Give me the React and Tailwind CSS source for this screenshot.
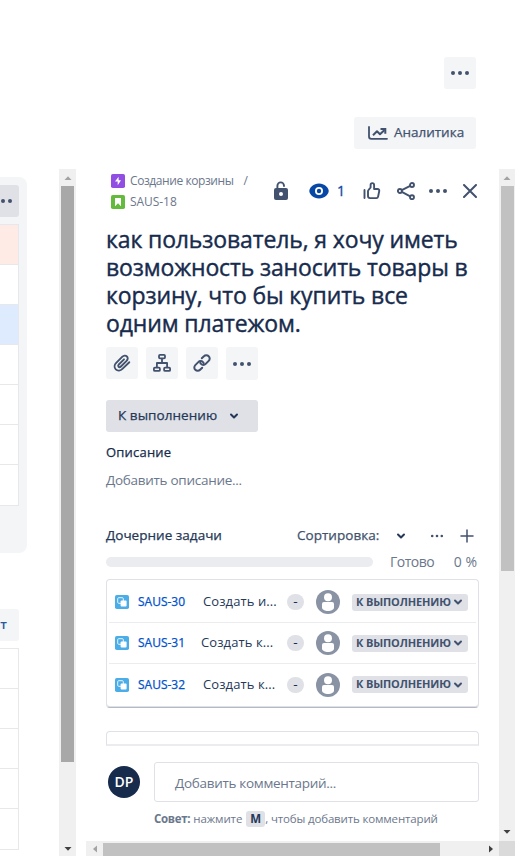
import React from "react";

const Dots = ({ className = "", r = 2, gap = 7 }) => (
  <svg width="20" height="6" viewBox="-10 -3 20 6" fill="currentColor" className={`shrink-0 ${className}`}>
    <circle cx={-gap} r={r} />
    <circle r={r} />
    <circle cx={gap} r={r} />
  </svg>
);

const Chevron = ({ className = "" }) => (
  <svg width="10" height="8" viewBox="0 0 10 8" fill="none" stroke="currentColor" strokeWidth="2" strokeLinecap="round" strokeLinejoin="round" className={`shrink-0 ${className}`}>
    <path d="M2 2.500l3 3 3-3" />
  </svg>
);

const Arrow = ({ d, fill }) => (
  <svg width="8" height="8" viewBox="0 0 8 8" fill={fill} className="shrink-0">
    <path d={d} />
  </svg>
);
const UP = "M0.500 6L4 2.200 7.500 6z";
const DOWN = "M0.500 2L4 5.800 7.500 2z";
const LEFT = "M6 0.500L2 4 6 7.500z";
const RIGHT = "M2 0.500L6 4 2 7.500z";

const Analytics = () => (
  <svg width="20" height="14" viewBox="0 0 20 14" fill="none" stroke="currentColor" strokeWidth="2" strokeLinecap="round" strokeLinejoin="round" className="shrink-0">
    <path d="M1 1v9.500a2.300 2.300 0 0 0 2.300 2.300H19" strokeWidth="1.800" />
    <path d="M5 9.300L9 5.200l3 3L16.500 4" strokeLinecap="butt" />
    <path d="M12.500 3h4.800v4.800" strokeLinecap="butt" strokeLinejoin="miter" />
  </svg>
);

const Lock = () => (
  <svg width="16" height="20" viewBox="0 0 16 20" className="shrink-0">
    <path d="M4.400 8.500V4.700a3.300 3.300 0 0 1 6.600 0v1" fill="none" stroke="currentColor" strokeWidth="1.900" />
    <rect x="1" y="7" width="14" height="12" rx="2" fill="currentColor" />
    <circle cx="8" cy="13" r="2" fill="#fff" />
  </svg>
);

const Eye = () => (
  <svg width="20" height="16" viewBox="0 0 20 16" className="shrink-0">
    <path d="M10 0.500C4.500 0.500 0.300 4.700 0.300 8s4.200 7.500 9.700 7.500S19.700 11.300 19.700 8 15.500 0.500 10 0.500z" fill="#0747A6" />
    <circle cx="10" cy="8" r="4" fill="#fff" />
    <circle cx="10" cy="8" r="2.200" fill="#0747A6" />
  </svg>
);

const Thumb = () => (
  <svg width="18" height="18" viewBox="0 0 18 18" fill="none" stroke="currentColor" strokeWidth="1.900" strokeLinecap="round" strokeLinejoin="round" className="shrink-0">
    <path d="M1.500 8v8" />
    <path d="M5 14V9.200c0-.6.200-1 .6-1.400l2-2.300V3c0-1.100.7-1.900 1.700-1.900s1.800.9 1.800 2V7H14.500c1.300 0 2 1 1.700 2.200l-1.100 5.400c-.2.900-.8 1.500-1.700 1.500H7C5.800 16.100 5 15.300 5 14z" />
  </svg>
);

const Share = () => (
  <svg width="18" height="18" viewBox="0 0 18 18" fill="none" stroke="currentColor" strokeWidth="1.900" className="shrink-0">
    <circle cx="2.900" cy="9" r="2" />
    <circle cx="15" cy="3" r="2" />
    <circle cx="15" cy="15.200" r="2" />
    <path d="M4.800 8.100l8.400-4.200M4.800 9.900l8.400 4.400" />
  </svg>
);

const Close = () => (
  <svg width="14" height="14" viewBox="0 0 14 14" fill="none" stroke="currentColor" strokeWidth="2" strokeLinecap="round" className="shrink-0">
    <path d="M1 1l12 12M13 1L1 13" />
  </svg>
);

const Clip = () => (
  <svg width="18" height="18" viewBox="0 0 18 18" fill="none" stroke="currentColor" strokeWidth="1.900" strokeLinecap="round" strokeLinejoin="round">
    <path d="M16.300 8.200l-6.900 6.700c-1.900 1.900-4.800 2.200-6.600.5-1.800-1.800-1.500-4.600.4-6.500l6.200-6.200c1.300-1.300 3.300-1.500 4.500-.3s1 3.100-.3 4.400l-5.700 5.700c-.8.800-1.700.9-2.300.3s-.5-1.500.2-2.300L11 5.300" />
  </svg>
);

const Tree = () => (
  <svg width="18" height="18" viewBox="0 0 18 18" fill="none" stroke="currentColor" strokeWidth="1.800" strokeLinejoin="round">
    <rect x="6" y="0.900" width="6" height="3.400" rx="1" />
    <rect x="0.900" y="13.700" width="6" height="3.200" rx="1" />
    <rect x="11.100" y="13.700" width="6" height="3.200" rx="1" />
    <path d="M9 4.500V9M3.900 13.500V9h10.200v4.500" />
  </svg>
);

const Link = () => (
  <svg width="18" height="18" viewBox="0 0 18 18" fill="none" stroke="currentColor" strokeWidth="2" strokeLinecap="round" strokeLinejoin="round">
    <path d="M8.800 4.300l2.100-2.100a3.300 3.300 0 0 1 4.800 0 3.300 3.300 0 0 1 0 4.700l-3 3a3.300 3.300 0 0 1-4.700 0 3.300 3.300 0 0 1-.7-1.100" />
    <path d="M9.200 13.700l-2.100 2.100a3.300 3.300 0 0 1-4.800 0 3.300 3.300 0 0 1 0-4.700l3-3a3.300 3.300 0 0 1 4.700 0c.3.300.5.700.7 1.100" />
  </svg>
);

const Plus = () => (
  <svg width="14" height="14" viewBox="0 0 14 14" fill="none" stroke="currentColor" strokeWidth="1.500" strokeLinecap="round" className="shrink-0">
    <path d="M7 1v12M1 7h12" />
  </svg>
);

const Epic = () => (
  <svg width="14" height="14" viewBox="0 0 14 14" className="shrink-0">
    <rect width="14" height="14" rx="1.800" fill="#904EE2" />
    <path d="M7.600 2.800L4 7.600h2.700v3.600L10 6.300H7.600z" fill="#fff" />
  </svg>
);

const Story = () => (
  <svg width="14" height="14" viewBox="0 0 14 14" className="shrink-0">
    <rect width="14" height="14" rx="1.800" fill="#63BA3C" />
    <path d="M4 3h6v8.200L7 8.300l-3 2.900z" fill="#fff" />
  </svg>
);

const Subtask = () => (
  <svg width="14" height="14" viewBox="0 0 14 14" className="shrink-0">
    <rect width="14" height="14" rx="1.800" fill="#4BADE8" />
    <rect x="2.700" y="2.700" width="5.600" height="5.600" rx="1" fill="none" stroke="#fff" strokeWidth="1" opacity=".85" />
    <rect x="5.600" y="5.600" width="6" height="6" rx="1" fill="#fff" />
  </svg>
);

const Person = () => (
  <svg width="24" height="24" viewBox="0 0 24 24" className="shrink-0">
    <circle cx="12" cy="12" r="12" fill="#8993A4" />
    <circle cx="12" cy="7.300" r="4" fill="#fff" />
    <path d="M6 14a2 2 0 0 1 2-2h8a2 2 0 0 1 2 2v3.500c0 2-3 3.600-6 3.600s-6-1.600-6-3.600z" fill="#fff" />
  </svg>
);

const Tool = ({ children, tall }) => (
  <button className={`flex w-8 items-center justify-center rounded-[3px] bg-[#F4F5F7] ${tall ? "h-[33px]" : "h-8"}`}>{children}</button>
);

const tasks = [
  { id: "SAUS-30", title: "Создать и...", pad: "pl-[17px]" },
  { id: "SAUS-31", title: "Создать к...", pad: "pl-[15px]" },
  { id: "SAUS-32", title: "Создать к...", pad: "pl-[17px]" },
];

function Board() {
  return (
    <div className="w-[59px] shrink-0 overflow-hidden pt-2">
      <div className="h-[376px] w-[27px] rounded-r-lg bg-[#F4F5F7] pt-2">
        <div className="flex h-8 w-[19px] items-center justify-end rounded-r-[3px] bg-[#DFE1E6] pr-[6px]">
          <Dots />
        </div>
        <div className="mt-[7px] w-[19px] border-r border-t border-[#E6E8EC]">
          {["bg-[#FFEBE6]", "bg-white", "bg-[#DEEBFF]", "bg-white", "bg-white", "bg-white"].map((c, i) => (
            <div key={i} className={`h-10 border-b border-[#E6E8EC] ${c}`} />
          ))}
          <div className="h-[41px] border-b border-[#E6E8EC] bg-white" />
        </div>
      </div>
      <div className="mt-14 flex h-8 w-[19px] items-center justify-end overflow-hidden rounded-r-[3px] bg-[#F4F5F7] pr-3 text-[13px] font-semibold text-[#2A5A9E]">
        <span>нт</span>
      </div>
      <div className="mt-[7px] w-[19px] border-r border-t border-[#E6E8EC]">
        {[0, 1, 2, 3].map((i) => (
          <div key={i} className="h-10 border-b border-[#E6E8EC]" />
        ))}
        <div className="h-[41px] border-b border-[#E6E8EC]" />
      </div>
    </div>
  );
}

function Header() {
  return (
    <div className="flex h-[56px] pl-[5px]">
      <div className="w-[160px] shrink-0 pt-px text-[12px] text-[#6B778C]">
        <div className="flex h-[21px] items-center gap-[5px] whitespace-nowrap">
          <Epic />
          <span className="tracking-[-0.42px]">Создание корзины</span>
          <span className="ml-[5px]">/</span>
        </div>
        <div className="mt-px flex h-5 items-center gap-[5px]">
          <Story />
          <span className="tracking-[-0.05px]">SAUS-18</span>
        </div>
      </div>
      <div className="flex h-11 items-center text-[#42526E]">
        <span className="ml-[2px]"><Lock /></span>
        <span className="ml-5"><Eye /></span>
        <span className="ml-2 w-2 pb-px text-[14px] text-[#0747A6] [-webkit-text-stroke:0.3px]">1</span>
        <span className="ml-[18px]"><Thumb /></span>
        <span className="ml-4"><Share /></span>
        <span className="ml-[13px]"><Dots /></span>
        <span className="ml-[15px]"><Close /></span>
      </div>
    </div>
  );
}

function Tasks() {
  return (
    <div className="mt-3 h-[129px] w-[373px] rounded-[4px] border border-[#DFE1E6] border-b-[#B3BAC5] px-[2px] pt-[2px] shadow-[inset_0_-1px_0_#dfe1e6]">
      {tasks.map((t, i) => (
        <div key={t.id} className={`flex h-[41px] items-center pl-[6px] ${i < 2 ? "border-b border-[#EBECF0]" : ""}`}>
          <Subtask />
          <span className="ml-[9px] w-[48px] whitespace-nowrap text-[12px] text-[#0052CC] [-webkit-text-stroke:0.25px]">{t.id}</span>
          <span className={`w-[101px] whitespace-nowrap text-[13px] tracking-[0.1px] text-[#253858] ${t.pad}`}>{t.title}</span>
          <span className="flex h-4 w-[17px] items-center justify-center rounded-full bg-[#DFE1E6] text-[12px] leading-4 text-[#172B4D] [-webkit-text-stroke:0.3px]">-</span>
          <span className="ml-3"><Person /></span>
          <span className="ml-3 flex h-[17px] w-[116px] items-center justify-between rounded-[3px] bg-[#DFE1E6] pl-1 pr-[5px] text-[11px] font-bold text-[#42526E]">
            <span className="whitespace-nowrap tracking-[-0.15px]">К ВЫПОЛНЕНИЮ</span>
            <Chevron />
          </span>
        </div>
      ))}
    </div>
  );
}

function Issue() {
  return (
    <div className="h-[672px] overflow-hidden pl-5">
      <Header />
      <h1 className="h-28 whitespace-nowrap text-[23px] leading-7 tracking-[-0.13px] text-[#172B4D] [-webkit-text-stroke:0.4px]">
        как пользователь, я хочу иметь
        <br />
        возможность заносить товары в
        <br />
        корзину, что бы купить все
        <br />
        одним платежом.
      </h1>
      <div className="mt-[10px] flex h-[33px] gap-2 text-[#42526E]">
        <Tool><Clip /></Tool>
        <Tool><Tree /></Tool>
        <Tool><Link /></Tool>
        <Tool tall><Dots /></Tool>
      </div>
      <button className="mt-5 flex h-8 w-[152px] items-center rounded-[3px] bg-[#DFE1E6] pl-3 text-[13.5px] text-[#253858]">
        <span className="w-[111px] whitespace-nowrap pb-px text-left tracking-[0.05px] [-webkit-text-stroke:0.25px]">К выполнению</span>
        <Chevron />
      </button>
      <div className="mt-[10px] h-5 text-[13px] leading-5 tracking-[0.2px] text-[#172B4D] [-webkit-text-stroke:0.25px]">Описание</div>
      <div className="mt-2 h-5 text-[13.5px] leading-5 tracking-[-0.28px] text-[#6B778C]">Добавить описание...</div>
      <div className="mt-[36px] flex h-5 items-center text-[13.5px] text-[#253858]">
        <span className="w-[191px] whitespace-nowrap pb-px tracking-[0.02px] [-webkit-text-stroke:0.25px]">Дочерние задачи</span>
        <span className="w-[99px] whitespace-nowrap pb-px tracking-[0.03px] text-[#42526E] [-webkit-text-stroke:0.25px]">Сортировка:</span>
        <span className="text-[#253858]"><Chevron /></span>
        <span className="ml-[21px] text-[#42526E]"><Dots r={1.3} gap={4.8} /></span>
        <span className="ml-[13px] text-[#42526E]"><Plus /></span>
      </div>
      <div className="mt-[6px] flex h-5 w-[371px] items-center text-[14px] text-[#6B778C]">
        <span className="h-[10px] w-[267px] rounded-full bg-[#EBECF0]" />
        <span className="ml-[17px] pb-px tracking-[-0.5px]">Готово</span>
        <span className="ml-auto whitespace-nowrap pb-px">0 %</span>
      </div>
      <div className="-mt-[5px]"><Tasks /></div>
      <div className="mt-[23px] h-[15px] w-[373px] rounded-t-[4px] border border-b-2 border-[#DFE1E6] border-b-[#EBECF0]" />
      <div className="mt-4 flex">
        <div className="ml-[2px] mt-1 flex size-8 items-center justify-center rounded-full bg-[#172B4D] pb-[2px] text-[14px] font-semibold text-white">DP</div>
        <div className="ml-[14px]">
          <div className="flex h-10 w-[325px] items-center rounded-[3px] border border-[#DFE1E6] pl-5 pt-[2px] text-[13.5px] tracking-[-0.3px] text-[#6B778C]">Добавить комментарий...</div>
          <div className="mt-2 flex h-[18px] items-center whitespace-nowrap text-[11.5px] tracking-[-0.12px] text-[#6B778C]">
            <b className="font-bold tracking-[-0.3px]">Совет:</b>
            <span className="ml-[3px]">нажмите</span>
            <span className="ml-1 flex h-4 w-[19px] items-center justify-center rounded-[3px] bg-[#DFE1E6] font-bold text-[#253858]">M</span>
            <span className="tracking-[-0.15px]">, чтобы добавить комментарий</span>
          </div>
        </div>
      </div>
    </div>
  );
}

export default function App() {
  return (
    <div className="flex h-[856px] w-[515px] flex-col overflow-hidden bg-white font-['Open_Sans','Noto_Sans',sans-serif] text-[#42526E]">
      <div className="flex h-[169px] shrink-0 flex-col items-end pr-[39px] pt-[57px]">
        <button className="flex size-8 items-center justify-center rounded-[3px] bg-[#F4F5F7]"><Dots /></button>
        <button className="mt-7 flex h-8 w-[122px] items-center gap-[6px] rounded-[3px] bg-[#F4F5F7] pl-[14px] text-[13.5px]">
          <Analytics />
          <span className="pb-px tracking-[-0.02px] [-webkit-text-stroke:0.25px]">Аналитика</span>
        </button>
      </div>
      <div className="flex min-h-0 flex-1">
        <Board />
        <div className="flex w-[17px] shrink-0 flex-col items-center bg-[#F0F0F0]">
          <div className="flex h-[17px] items-center"><Arrow d={UP} fill="#A3A3A3" /></div>
          <div className="h-[576px] w-[13px] self-center bg-[#A8A8A8]" />
          <div className="mt-auto flex h-[15px] items-center"><Arrow d={DOWN} fill="#404040" /></div>
        </div>
        <div className="ml-[10px] w-[413px] shrink-0">
          <Issue />
          <div className="flex h-[15px] items-center bg-[#F0F0F0]">
            <div className="flex w-[17px] justify-center"><Arrow d={LEFT} fill="#A3A3A3" /></div>
            <div className="mt-[2px] h-[13px] w-[337px] bg-[#C1C1C1]" />
            <div className="ml-auto flex w-[17px] justify-center"><Arrow d={RIGHT} fill="#404040" /></div>
          </div>
        </div>
        <div className="flex w-4 shrink-0 flex-col bg-[#F0F0F0]">
          <div className="flex h-[17px] items-center justify-center"><Arrow d={UP} fill="#A3A3A3" /></div>
          <div className="ml-[2px] h-[385px] w-[13px] bg-[#C1C1C1]" />
          <div className="mb-[5px] mt-auto flex justify-center"><Arrow d={DOWN} fill="#404040" /></div>
          <div className="h-[15px] shrink-0 bg-[#DADADA]" />
        </div>
      </div>
    </div>
  );
}
